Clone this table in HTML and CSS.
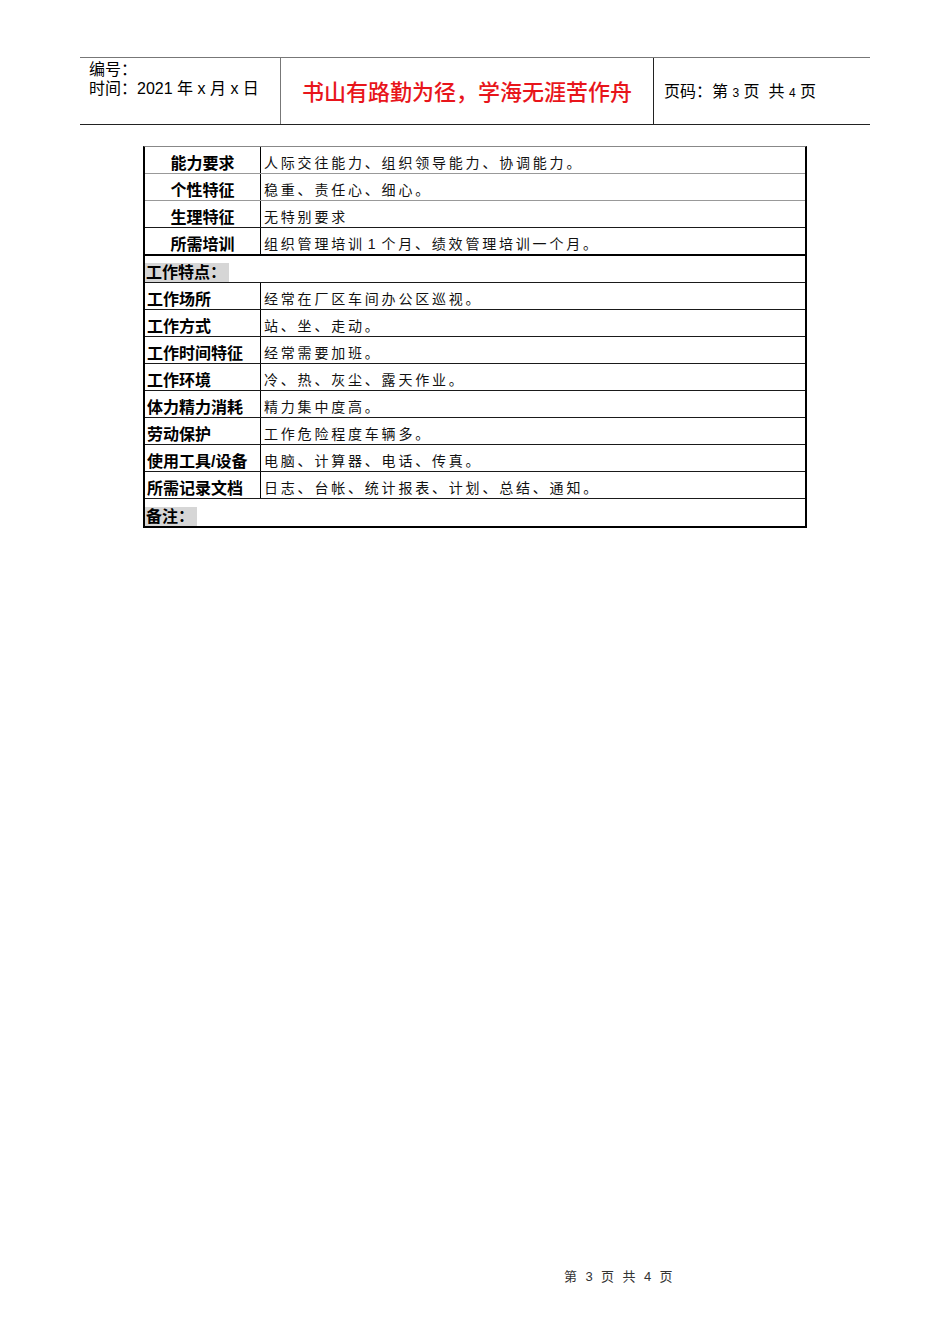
FILE: index.html
```html
<!DOCTYPE html>
<html lang="zh-CN">
<head>
<meta charset="utf-8">
<title>岗位说明书</title>
<link rel="stylesheet" href="styles.css">
</head>
<body>
<div class="page">
  <header class="doc-head">
    <div class="head-left">
      <div>编号：</div>
      <div>时间：2021 年 x 月 x 日</div>
    </div>
    <div class="head-title">书山有路勤为径，学海无涯苦作舟</div>
    <div class="head-right">页码：第 <span class="num">3</span> 页&nbsp;&nbsp;共 <span class="num">4</span> 页</div>
  </header>

  <div class="sheet">
    <div class="row gray"><div class="label center">能力要求</div><div class="value">人际交往能力、组织领导能力、协调能力。</div></div>
    <div class="row gray"><div class="label center">个性特征</div><div class="value">稳重、责任心、细心。</div></div>
    <div class="row"><div class="label center">生理特征</div><div class="value">无特别要求</div></div>
    <div class="row thick"><div class="label center">所需培训</div><div class="value">组织管理培训<span class="digit">1</span>个月、绩效管理培训一个月。</div></div>
    <div class="row section"><span class="sec-title">工作特点：</span></div>
    <div class="row"><div class="label">工作场所</div><div class="value">经常在厂区车间办公区巡视。</div></div>
    <div class="row"><div class="label">工作方式</div><div class="value">站、坐、走动。</div></div>
    <div class="row"><div class="label">工作时间特征</div><div class="value">经常需要加班。</div></div>
    <div class="row"><div class="label">工作环境</div><div class="value">冷、热、灰尘、露天作业。</div></div>
    <div class="row"><div class="label">体力精力消耗</div><div class="value">精力集中度高。</div></div>
    <div class="row"><div class="label">劳动保护</div><div class="value">工作危险程度车辆多。</div></div>
    <div class="row"><div class="label">使用工具/设备</div><div class="value">电脑、计算器、电话、传真。</div></div>
    <div class="row"><div class="label">所需记录文档</div><div class="value">日志、台帐、统计报表、计划、总结、通知。</div></div>
    <div class="row section last"><span class="sec-title">备注：</span></div>
  </div>

  <footer class="doc-foot">第 3 页 共 4 页</footer>
</div>
</body>
</html>
```

FILE: styles.css
```css
html, body {
  margin: 0;
  padding: 0;
  background: #fff;
}

body {
  font-family: "Liberation Sans", "Noto Sans CJK SC", sans-serif;
  color: #000;
}

.page {
  width: 950px;
  min-height: 1344px;
  display: flex;
  flex-direction: column;
}

/* header */
.doc-head {
  margin: 57px 0 0 80px;
  width: 790px;
  height: 68px;
  box-sizing: border-box;
  border-top: 1px solid #777;
  border-bottom: 1px solid #222;
  display: flex;
}

.head-left {
  width: 201px;
  box-sizing: border-box;
  border-right: 1px solid #777;
  padding: 2px 0 0 9px;
  font-size: 16px;
  line-height: 19px;
}

.head-title {
  width: 373px;
  box-sizing: border-box;
  border-right: 1px solid #222;
  padding: 22px 0 0 21px;
  color: #e8151b;
  font-size: 22px;
  line-height: 26px;
  font-weight: 500;
}

.head-right {
  flex: 1;
  padding: 24px 0 0 10px;
  font-size: 16px;
  line-height: 20px;
}

.head-right .num {
  font-size: 12px;
}

/* table */
.sheet {
  margin: 21px 0 0 143px;
  width: 664px;
  box-sizing: border-box;
  border-left: 2px solid #000;
  border-right: 2px solid #000;
  border-top: 1px solid #888;
  border-bottom: 2px solid #000;
}

.row {
  display: flex;
  height: 27px;
  box-sizing: border-box;
  border-bottom: 1px solid #1a1a1a;
}

.row.gray {
  border-bottom-color: #999;
}

.row.thick {
  border-bottom: 2px solid #000;
  height: 28px;
}

.row.last {
  border-bottom: none;
  height: 27px;
}

.label {
  width: 116px;
  flex: none;
  box-sizing: border-box;
  border-right: 1px solid #000;
  padding: 0 0 1px 2px;
  font-size: 16px;
  font-weight: bold;
  line-height: 17px;
  display: flex;
  align-items: flex-end;
  white-space: nowrap;
}

.label.center {
  justify-content: center;
  padding-left: 0;
}

.value {
  flex: 1;
  padding: 0 0 0 3px;
  font-size: 14px;
  letter-spacing: 2.8px;
  line-height: 20px;
  display: flex;
  align-items: flex-end;
  white-space: nowrap;
  color: #111;
}

.value .digit {
  margin: 0 3px 0 3px;
}

.row.section {
  align-items: flex-end;
}

.sec-title {
  display: inline-block;
  background: #d6d6d6;
  font-size: 16px;
  font-weight: bold;
  line-height: 19px;
  padding: 0 3px 0 1px;
}

/* footer */
.doc-foot {
  margin-top: auto;
  margin-bottom: 59px;
  padding-left: 564px;
  font-size: 13px;
  line-height: 16px;
  letter-spacing: 2.4px;
  color: #333;
}
```
